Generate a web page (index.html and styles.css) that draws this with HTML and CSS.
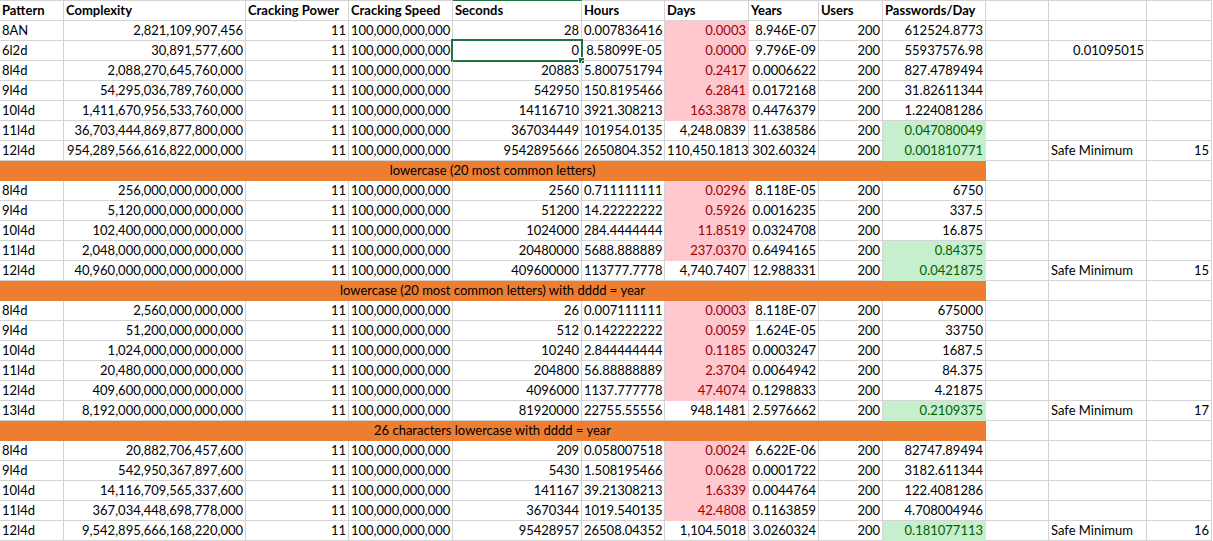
FILE: index.html
```html
<!DOCTYPE html>
<html>
<head>
<meta charset="utf-8">
<title>Password cracking</title>
<link rel="stylesheet" href="styles.css">
</head>
<body>
<div class="sheet">
  <div class="row head">
    <div class="c">Pattern</div><div class="c">Complexity</div><div class="c">Cracking Power</div><div class="c">Cracking Speed</div><div class="c colsel">Seconds</div><div class="c">Hours</div><div class="c">Days</div><div class="c">Years</div><div class="c">Users</div><div class="c">Passwords/Day</div><div class="c"></div><div class="c"></div><div class="c"></div>
  </div>

  <div class="row">
    <div class="c">8AN</div><div class="c r">2,821,109,907,456</div><div class="c r">11</div><div class="c r">100,000,000,000</div><div class="c r">28</div><div class="c r">0.007836416</div><div class="c r pink">0.0003</div><div class="c r">8.946E-07</div><div class="c r">200</div><div class="c r">612524.8773</div><div class="c"></div><div class="c"></div><div class="c"></div>
  </div>
  <div class="row">
    <div class="c">6l2d</div><div class="c r">30,891,577,600</div><div class="c r">11</div><div class="c r">100,000,000,000</div><div class="c r sel">0<span class="selbox"></span><span class="handle"></span></div><div class="c r">8.58099E-05</div><div class="c r pink">0.0000</div><div class="c r">9.796E-09</div><div class="c r">200</div><div class="c r">55937576.98</div><div class="c"></div><div class="c r">0.01095015</div><div class="c"></div>
  </div>
  <div class="row">
    <div class="c">8l4d</div><div class="c r">2,088,270,645,760,000</div><div class="c r">11</div><div class="c r">100,000,000,000</div><div class="c r">20883</div><div class="c r">5.800751794</div><div class="c r pink">0.2417</div><div class="c r">0.0006622</div><div class="c r">200</div><div class="c r">827.4789494</div><div class="c"></div><div class="c"></div><div class="c"></div>
  </div>
  <div class="row">
    <div class="c">9l4d</div><div class="c r">54,295,036,789,760,000</div><div class="c r">11</div><div class="c r">100,000,000,000</div><div class="c r">542950</div><div class="c r">150.8195466</div><div class="c r pink">6.2841</div><div class="c r">0.0172168</div><div class="c r">200</div><div class="c r">31.82611344</div><div class="c"></div><div class="c"></div><div class="c"></div>
  </div>
  <div class="row">
    <div class="c">10l4d</div><div class="c r">1,411,670,956,533,760,000</div><div class="c r">11</div><div class="c r">100,000,000,000</div><div class="c r">14116710</div><div class="c r">3921.308213</div><div class="c r pink">163.3878</div><div class="c r">0.4476379</div><div class="c r">200</div><div class="c r">1.224081286</div><div class="c"></div><div class="c"></div><div class="c"></div>
  </div>
  <div class="row">
    <div class="c">11l4d</div><div class="c r">36,703,444,869,877,800,000</div><div class="c r">11</div><div class="c r">100,000,000,000</div><div class="c r">367034449</div><div class="c r">101954.0135</div><div class="c r">4,248.0839</div><div class="c r">11.638586</div><div class="c r">200</div><div class="c r green">0.047080049</div><div class="c"></div><div class="c"></div><div class="c"></div>
  </div>
  <div class="row">
    <div class="c">12l4d</div><div class="c r">954,289,566,616,822,000,000</div><div class="c r">11</div><div class="c r">100,000,000,000</div><div class="c r">9542895666</div><div class="c r">2650804.352</div><div class="c r">110,450.1813</div><div class="c r">302.60324</div><div class="c r">200</div><div class="c r green">0.001810771</div><div class="c"></div><div class="c">Safe Minimum</div><div class="c r">15</div>
  </div>

  <div class="row">
    <div class="c band">lowercase (20 most common letters)</div><div class="c"></div><div class="c"></div><div class="c"></div>
  </div>
  <div class="row">
    <div class="c">8l4d</div><div class="c r">256,000,000,000,000</div><div class="c r">11</div><div class="c r">100,000,000,000</div><div class="c r">2560</div><div class="c r">0.711111111</div><div class="c r pink">0.0296</div><div class="c r">8.118E-05</div><div class="c r">200</div><div class="c r">6750</div><div class="c"></div><div class="c"></div><div class="c"></div>
  </div>
  <div class="row">
    <div class="c">9l4d</div><div class="c r">5,120,000,000,000,000</div><div class="c r">11</div><div class="c r">100,000,000,000</div><div class="c r">51200</div><div class="c r">14.22222222</div><div class="c r pink">0.5926</div><div class="c r">0.0016235</div><div class="c r">200</div><div class="c r">337.5</div><div class="c"></div><div class="c"></div><div class="c"></div>
  </div>
  <div class="row">
    <div class="c">10l4d</div><div class="c r">102,400,000,000,000,000</div><div class="c r">11</div><div class="c r">100,000,000,000</div><div class="c r">1024000</div><div class="c r">284.4444444</div><div class="c r pink">11.8519</div><div class="c r">0.0324708</div><div class="c r">200</div><div class="c r">16.875</div><div class="c"></div><div class="c"></div><div class="c"></div>
  </div>
  <div class="row">
    <div class="c">11l4d</div><div class="c r">2,048,000,000,000,000,000</div><div class="c r">11</div><div class="c r">100,000,000,000</div><div class="c r">20480000</div><div class="c r">5688.888889</div><div class="c r pink">237.0370</div><div class="c r">0.6494165</div><div class="c r">200</div><div class="c r green">0.84375</div><div class="c"></div><div class="c"></div><div class="c"></div>
  </div>
  <div class="row">
    <div class="c">12l4d</div><div class="c r">40,960,000,000,000,000,000</div><div class="c r">11</div><div class="c r">100,000,000,000</div><div class="c r">409600000</div><div class="c r">113777.7778</div><div class="c r">4,740.7407</div><div class="c r">12.988331</div><div class="c r">200</div><div class="c r green">0.0421875</div><div class="c"></div><div class="c">Safe Minimum</div><div class="c r">15</div>
  </div>

  <div class="row">
    <div class="c band">lowercase (20 most common letters) with dddd = year</div><div class="c"></div><div class="c"></div><div class="c"></div>
  </div>
  <div class="row">
    <div class="c">8l4d</div><div class="c r">2,560,000,000,000</div><div class="c r">11</div><div class="c r">100,000,000,000</div><div class="c r">26</div><div class="c r">0.007111111</div><div class="c r pink">0.0003</div><div class="c r">8.118E-07</div><div class="c r">200</div><div class="c r">675000</div><div class="c"></div><div class="c"></div><div class="c"></div>
  </div>
  <div class="row">
    <div class="c">9l4d</div><div class="c r">51,200,000,000,000</div><div class="c r">11</div><div class="c r">100,000,000,000</div><div class="c r">512</div><div class="c r">0.142222222</div><div class="c r pink">0.0059</div><div class="c r">1.624E-05</div><div class="c r">200</div><div class="c r">33750</div><div class="c"></div><div class="c"></div><div class="c"></div>
  </div>
  <div class="row">
    <div class="c">10l4d</div><div class="c r">1,024,000,000,000,000</div><div class="c r">11</div><div class="c r">100,000,000,000</div><div class="c r">10240</div><div class="c r">2.844444444</div><div class="c r pink">0.1185</div><div class="c r">0.0003247</div><div class="c r">200</div><div class="c r">1687.5</div><div class="c"></div><div class="c"></div><div class="c"></div>
  </div>
  <div class="row">
    <div class="c">11l4d</div><div class="c r">20,480,000,000,000,000</div><div class="c r">11</div><div class="c r">100,000,000,000</div><div class="c r">204800</div><div class="c r">56.88888889</div><div class="c r pink">2.3704</div><div class="c r">0.0064942</div><div class="c r">200</div><div class="c r">84.375</div><div class="c"></div><div class="c"></div><div class="c"></div>
  </div>
  <div class="row">
    <div class="c">12l4d</div><div class="c r">409,600,000,000,000,000</div><div class="c r">11</div><div class="c r">100,000,000,000</div><div class="c r">4096000</div><div class="c r">1137.777778</div><div class="c r pink">47.4074</div><div class="c r">0.1298833</div><div class="c r">200</div><div class="c r">4.21875</div><div class="c"></div><div class="c"></div><div class="c"></div>
  </div>
  <div class="row">
    <div class="c">13l4d</div><div class="c r">8,192,000,000,000,000,000</div><div class="c r">11</div><div class="c r">100,000,000,000</div><div class="c r">81920000</div><div class="c r">22755.55556</div><div class="c r">948.1481</div><div class="c r">2.5976662</div><div class="c r">200</div><div class="c r green">0.2109375</div><div class="c"></div><div class="c">Safe Minimum</div><div class="c r">17</div>
  </div>

  <div class="row">
    <div class="c band">26 characters lowercase with dddd = year</div><div class="c"></div><div class="c"></div><div class="c"></div>
  </div>
  <div class="row">
    <div class="c">8l4d</div><div class="c r">20,882,706,457,600</div><div class="c r">11</div><div class="c r">100,000,000,000</div><div class="c r">209</div><div class="c r">0.058007518</div><div class="c r pink">0.0024</div><div class="c r">6.622E-06</div><div class="c r">200</div><div class="c r">82747.89494</div><div class="c"></div><div class="c"></div><div class="c"></div>
  </div>
  <div class="row">
    <div class="c">9l4d</div><div class="c r">542,950,367,897,600</div><div class="c r">11</div><div class="c r">100,000,000,000</div><div class="c r">5430</div><div class="c r">1.508195466</div><div class="c r pink">0.0628</div><div class="c r">0.0001722</div><div class="c r">200</div><div class="c r">3182.611344</div><div class="c"></div><div class="c"></div><div class="c"></div>
  </div>
  <div class="row">
    <div class="c">10l4d</div><div class="c r">14,116,709,565,337,600</div><div class="c r">11</div><div class="c r">100,000,000,000</div><div class="c r">141167</div><div class="c r">39.21308213</div><div class="c r pink">1.6339</div><div class="c r">0.0044764</div><div class="c r">200</div><div class="c r">122.4081286</div><div class="c"></div><div class="c"></div><div class="c"></div>
  </div>
  <div class="row">
    <div class="c">11l4d</div><div class="c r">367,034,448,698,778,000</div><div class="c r">11</div><div class="c r">100,000,000,000</div><div class="c r">3670344</div><div class="c r">1019.540135</div><div class="c r pink">42.4808</div><div class="c r">0.1163859</div><div class="c r">200</div><div class="c r">4.708004946</div><div class="c"></div><div class="c"></div><div class="c"></div>
  </div>
  <div class="row">
    <div class="c">12l4d</div><div class="c r">9,542,895,666,168,220,000</div><div class="c r">11</div><div class="c r">100,000,000,000</div><div class="c r">95428957</div><div class="c r">26508.04352</div><div class="c r">1,104.5018</div><div class="c r">3.0260324</div><div class="c r">200</div><div class="c r green">0.181077113</div><div class="c"></div><div class="c">Safe Minimum</div><div class="c r">16</div>
  </div>
</div>
</body>
</html>
```

FILE: styles.css
```css
html, body {
  margin: 0;
  padding: 0;
  background: #ffffff;
}

body {
  font-family: Lato, "Liberation Sans", Arial, sans-serif;
  font-size: 13px;
  color: #000000;
}

.sheet {
  width: 1213px;
}

.row {
  display: grid;
  grid-template-columns: 64px 182px 103px 104px 129px 83px 84px 70px 64px 103px 63px 98px 65px;
  height: 20px;
}

.head {
  height: 21px;
  font-weight: bold;
}

.c {
  position: relative;
  box-sizing: border-box;
  border-right: 1px solid #d4d4d4;
  border-bottom: 1px solid #d4d4d4;
  padding: 0 2px;
  line-height: 19px;
  white-space: nowrap;
}

.head .c {
  border-top: 1px solid #d4d4d4;
}

.head .colsel {
  border-top-color: #217346;
}

.r {
  text-align: right;
}

.pink {
  background: #ffc7ce;
  color: #9c0006;
  border-right-color: #ffc7ce;
  border-bottom-color: #ffc7ce;
}

.green {
  background: #c6efce;
  color: #006100;
  border-right-color: #c6efce;
  border-bottom-color: #c6efce;
}

.band {
  grid-column: span 10;
  background: #ed7d31;
  border-right-color: #ed7d31;
  border-bottom-color: #ed7d31;
  text-align: center;
}

.selbox {
  position: absolute;
  left: -2px;
  top: -2px;
  right: -2px;
  bottom: -2px;
  border: 2px solid #217346;
}

.handle {
  position: absolute;
  right: -4px;
  bottom: -4px;
  width: 5px;
  height: 5px;
  background: #217346;
  border: 1px solid #ffffff;
}
```
